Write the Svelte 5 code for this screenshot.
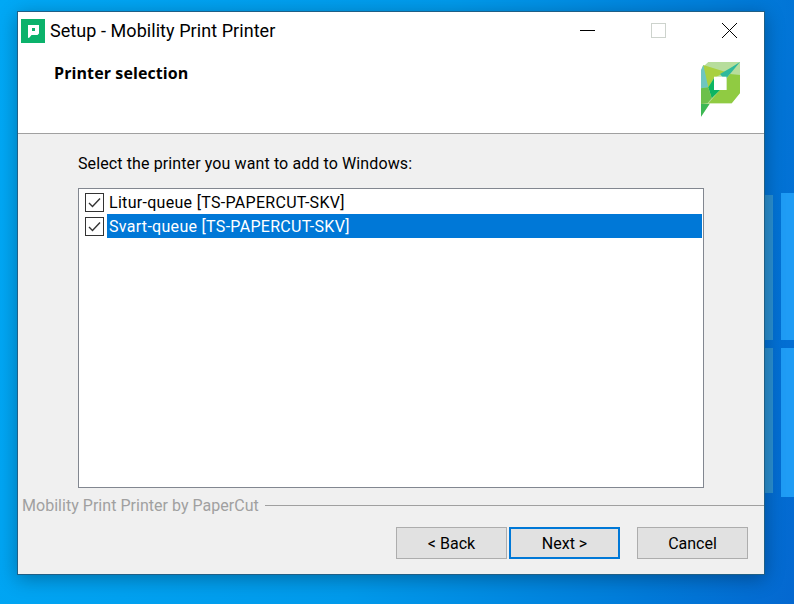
<script>
	const printers = [
		{ name: 'Litur-queue [TS-PAPERCUT-SKV]', selected: false },
		{ name: 'Svart-queue [TS-PAPERCUT-SKV]', selected: true }
	];
</script>

<div class="desktop">
	<div class="pane pane-a"></div>
	<div class="pane pane-b"></div>
	<div class="pane pane-c"></div>
	<div class="pane pane-d"></div>

	<div class="window">
		<div class="titlebar">
			<svg class="app-icon" width="24" height="24" viewBox="0 0 24 24">
				<rect width="24" height="24" fill="#0bb26b" />
				<path d="M7 6h11v8.5l-1.5 1.5H10.5L8.5 18.5 7 19z" fill="#fff" />
				<rect x="11" y="9" width="3" height="3" fill="#0bb26b" />
			</svg>
			<span class="title">Setup - Mobility Print Printer</span>
			<div class="controls">
				<svg width="15" height="15" viewBox="0 0 15 15"><path d="M0 7.5h15" stroke="#000" /></svg>
				<svg width="15" height="15" viewBox="0 0 15 15"><rect x=".5" y=".5" width="14" height="14" fill="none" stroke="#cdd3cd" /></svg>
				<svg width="15" height="15" viewBox="0 0 15 15"><path d="M0 0l15 15M15 0L0 15" stroke="#000" /></svg>
			</div>
		</div>
		<div class="header">
			<h1>Printer selection</h1>
			<svg class="logo" width="39" height="55" viewBox="0 0 39 55">
				<path d="M0 54.7V9.7L4 3 7.3 0H39v31l-8.3 10.3H9z" fill="#b7dd9c" />
				<path d="M2.3 3 24 9.7 13 16.3 7.3 25.3 0.7 8z" fill="#a9d03f" />
				<path d="M0 8 2.3 3 7.3 25.3 0 26.3z" fill="#6ec6bf" />
				<path d="M39 0 24 18 19 12 29 6.3z" fill="#2fb99b" />
				<path d="M39 13 29 12 25.7 16.3V28H19L7.5 41.3H30.7L39 31z" fill="#90cb42" />
				<path d="M7.3 25.3 13 16.3 19 28 10.7 36.3z" fill="#0cb562" />
				<path d="M0 26.3 7.3 25.3 10.7 36.3 6.5 41.3 0 42z" fill="#6cc04b" />
				<path d="M0 42H8.5L0 54.7z" fill="#3cb854" />
				<rect x="13" y="14.7" width="12.5" height="13.3" fill="#fff" />
			</svg>
		</div>
		<div class="body">
			<p class="prompt">Select the printer you want to add to Windows:</p>
			<div class="list">
				{#each printers as printer}
					<div class="row">
						<svg class="check" width="19" height="19" viewBox="0 0 19 19">
							<rect x=".5" y=".5" width="18" height="18" fill="#fff" stroke="#333" />
							<path d="M4 10l3.5 3.5L15 5.5" fill="none" stroke="#333" stroke-width="1.4" />
						</svg>
						<span class="label" class:selected={printer.selected}>{printer.name}</span>
					</div>
				{/each}
			</div>
		</div>
		<div class="brand">
			<span>Mobility Print Printer by PaperCut</span>
			<i></i>
		</div>
		<div class="footer">
			<button>&lt; Back</button>
			<button class="default">Next &gt;</button>
			<button class="cancel">Cancel</button>
		</div>
	</div>
</div>

<style>
	:global(body) {
		margin: 0;
	}
	.desktop {
		position: relative;
		width: 794px;
		height: 604px;
		overflow: hidden;
		background: linear-gradient(100deg, #00a8f5 0%, #009aeb 50%, #0080dc 78%, #0468d0 100%);
	}
	.pane {
		position: absolute;
		background: #1f9cf5;
	}
	.pane-a {
		left: 765px;
		top: 195px;
		width: 8px;
		height: 145px;
		background: #2a8fd0;
	}
	.pane-b {
		left: 781px;
		top: 193px;
		width: 13px;
		height: 147px;
	}
	.pane-c {
		left: 765px;
		top: 348px;
		width: 8px;
		height: 145px;
		background: #2a8fd0;
	}
	.pane-d {
		left: 781px;
		top: 348px;
		width: 13px;
		height: 149px;
	}
	.window {
		position: absolute;
		left: 17px;
		top: 11px;
		width: 746px;
		height: 562px;
		border: 1px solid #1f5f86;
		background: #f0f0f0;
		display: flex;
		flex-direction: column;
		font-family: Roboto, 'Noto Sans', sans-serif;
		color: #000;
		box-shadow: 0 4px 18px rgba(0, 0, 0, 0.3);
	}
	.titlebar {
		height: 37px;
		flex: none;
		background: #fff;
		display: flex;
		align-items: center;
		padding: 0 0 0 3px;
	}
	.title {
		margin-left: 5px;
		font-size: 18px;
		letter-spacing: 0.06px;
	}
	.controls {
		margin-left: auto;
		display: flex;
		gap: 56px;
		padding-right: 27px;
	}
	.header {
		flex: none;
		height: 84px;
		background: #fff;
		border-bottom: 1px solid #a0a0a0;
		display: flex;
		justify-content: space-between;
		padding-left: 36px;
		padding-right: 24px;
	}
	h1 {
		margin: 14px 0 0;
		font-family: 'Open Sans', sans-serif;
		font-size: 16px;
		font-weight: 700;
		line-height: 20px;
		letter-spacing: 0.1px;
	}
	.logo {
		margin-top: 13px;
	}
	.body {
		flex: 1;
		padding: 20px 60px 0;
		min-height: 0;
	}
	.prompt {
		margin: 0 0 14px;
		font-size: 16px;
		line-height: 20px;
		letter-spacing: 0.11px;
	}
	.list {
		height: 296px;
		border: 1px solid #828790;
		background: #fff;
		padding: 1px;
	}
	.row {
		height: 24px;
		display: flex;
		align-items: center;
		padding-left: 5px;
		font-size: 16px;
		letter-spacing: 0.3px;
	}
	.label {
		flex: 1;
		margin-left: 3px;
		height: 24px;
		line-height: 25px;
		padding-left: 2px;
	}
	.label.selected {
		background: #0078d7;
		color: #fff;
	}
	.brand {
		flex: none;
		height: 0;
		display: flex;
		align-items: center;
		padding-left: 4px;
		font-size: 16px;
		letter-spacing: 0.03px;
		color: #a0a0a0;
	}
	.brand i {
		flex: 1;
		height: 1px;
		background: #a0a0a0;
		margin-left: 6px;
	}
	.footer {
		flex: none;
		height: 69px;
		display: flex;
		padding: 22px 16px 0 0;
		box-sizing: border-box;
		justify-content: flex-end;
		gap: 2px;
	}
	button {
		width: 111px;
		height: 32px;
		border: 1px solid #adadad;
		background: #e1e1e1;
		font: inherit;
		font-size: 16px;
		color: #000;
		padding: 0;
	}
	button.default {
		border: 2px solid #0078d7;
	}
	button.cancel {
		margin-left: 15px;
	}
</style>
